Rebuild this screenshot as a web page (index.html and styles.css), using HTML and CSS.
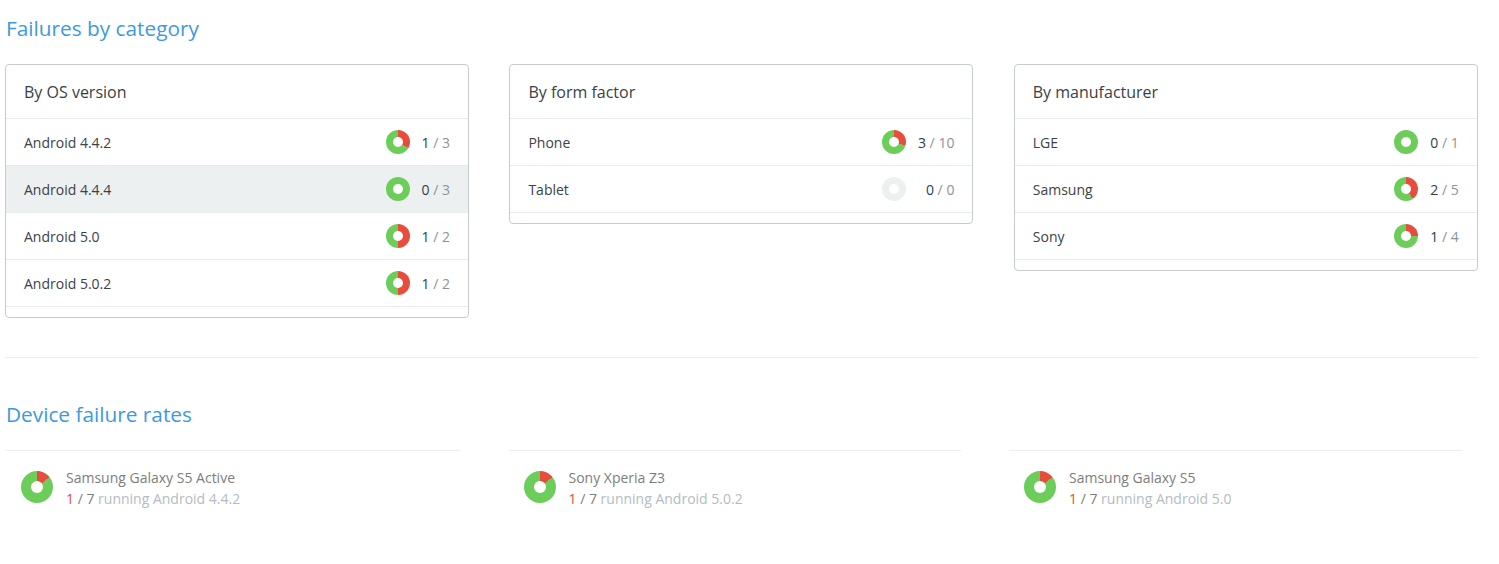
FILE: index.html
```html
<!DOCTYPE html>
<html lang="en">
<head>
<meta charset="utf-8">
<title>Failures</title>
<link rel="stylesheet" href="styles.css">
</head>
<body>
<div class="page">
  <h2 class="section-title">Failures by category</h2>
  <div class="cards">
    <div class="card">
      <div class="card-head">By OS version</div>
      <table class="card-table">
        <tr><td class="name">Android 4.4.2</td><td class="pie"><span class="donut" style="--p:33.33%"></span></td><td class="count"><b>1</b> / 3</td></tr>
        <tr class="active"><td class="name">Android 4.4.4</td><td class="pie"><span class="donut" style="--p:0%"></span></td><td class="count"><b>0</b> / 3</td></tr>
        <tr><td class="name">Android 5.0</td><td class="pie"><span class="donut" style="--p:50%"></span></td><td class="count"><b>1</b> / 2</td></tr>
        <tr><td class="name">Android 5.0.2</td><td class="pie"><span class="donut" style="--p:50%"></span></td><td class="count"><b>1</b> / 2</td></tr>
      </table>
    </div>
    <div class="card">
      <div class="card-head">By form factor</div>
      <table class="card-table">
        <tr><td class="name">Phone</td><td class="pie"><span class="donut" style="--p:30%"></span></td><td class="count"><b>3</b> / 10</td></tr>
        <tr><td class="name">Tablet</td><td class="pie"><span class="donut empty"></span></td><td class="count"><b>0</b> / 0</td></tr>
      </table>
    </div>
    <div class="card">
      <div class="card-head">By manufacturer</div>
      <table class="card-table">
        <tr><td class="name">LGE</td><td class="pie"><span class="donut" style="--p:0%"></span></td><td class="count"><b>0</b> / 1</td></tr>
        <tr><td class="name">Samsung</td><td class="pie"><span class="donut" style="--p:40%"></span></td><td class="count"><b>2</b> / 5</td></tr>
        <tr><td class="name">Sony</td><td class="pie"><span class="donut" style="--p:25%"></span></td><td class="count"><b>1</b> / 4</td></tr>
      </table>
    </div>
  </div>
  <hr class="divider">
  <h2 class="section-title">Device failure rates</h2>
  <div class="devices">
    <div class="device">
      <span class="donut big" style="--p:14.29%"></span>
      <div class="device-text">
        <div class="device-name">Samsung Galaxy S5 Active</div>
        <div class="device-rate"><span class="fail">1</span> <span class="total">/ 7</span> running Android 4.4.2</div>
      </div>
    </div>
    <div class="device">
      <span class="donut big" style="--p:14.29%"></span>
      <div class="device-text">
        <div class="device-name">Sony Xperia Z3</div>
        <div class="device-rate"><span class="fail">1</span> <span class="total">/ 7</span> running Android 5.0.2</div>
      </div>
    </div>
    <div class="device">
      <span class="donut big" style="--p:14.29%"></span>
      <div class="device-text">
        <div class="device-name">Samsung Galaxy S5</div>
        <div class="device-rate"><span class="fail">1</span> <span class="total">/ 7</span> running Android 5.0</div>
      </div>
    </div>
  </div>
</div>
</body>
</html>
```

FILE: styles.css
```css
* { box-sizing: border-box; }

body {
  margin: 0;
  background: #fff;
  font-family: "Open Sans", "Noto Sans", "Liberation Sans", sans-serif;
  color: #3b4248;
}

.page {
  width: 1483px;
  padding: 0 5px;
}

.section-title {
  margin: 17px 0 25px 0;
  font-size: 20.8px;
  line-height: 22px;
  font-weight: 400;
  color: #3d9ade;
  padding-left: 1px;
}

.cards {
  display: grid;
  grid-template-columns: 464px 464px 464px;
  column-gap: 40.4px;
  align-items: start;
}

.card {
  border: 1px solid #c6cbcf;
  border-radius: 4px;
  padding-bottom: 10px;
  background: #fff;
}

.card-head {
  height: 54px;
  display: flex;
  align-items: center;
  padding: 0 18px;
  font-size: 16px;
  color: #3a3f44;
  border-bottom: 1px solid #e9ecee;
}

.card-table {
  width: 100%;
  border-collapse: separate;
  border-spacing: 0;
}

.card-table td {
  height: 47px;
  border-bottom: 1px solid #e9ecee;
  font-size: 14px;
  vertical-align: middle;
  padding: 0;
}

.card-table tr.active td { background: #ecf0f1; }

.card-table .name {
  padding-left: 18px;
  color: #3b4248;
}

.card-table .pie {
  width: 36px;
  padding-right: 12px;
  line-height: 0;
}

.card-table .count {
  width: 1px;
  white-space: nowrap;
  text-align: right;
  padding-right: 18px;
  color: #8a9597;
}

.card-table .count b {
  font-weight: 400;
  color: #2c3e50;
}

.donut {
  display: inline-block;
  position: relative;
  width: 24px;
  height: 24px;
  border-radius: 50%;
  background: conic-gradient(#e74c3c 0 var(--p), #6ccd5a var(--p) 100%);
}

.donut::after {
  content: "";
  position: absolute;
  left: 50%;
  top: 50%;
  width: 10px;
  height: 10px;
  margin: -5px 0 0 -5px;
  border-radius: 50%;
  background: #fff;
}

.donut.empty { background: #ecf0f1; }

.donut.big {
  width: 32px;
  height: 32px;
  flex: none;
}

.donut.big::after {
  width: 12px;
  height: 12px;
  margin: -6px 0 0 -6px;
}

.divider {
  margin: 39px 0 0 0;
  border: 0;
  border-top: 1px solid #eeeeee;
  height: 0;
}

.divider + .section-title { margin-top: 45px; }

.devices {
  display: grid;
  grid-template-columns: 454px 452px 453px;
  column-gap: 48.5px;
  padding-left: 1px;
}

.device {
  border-top: 1px solid #eeeeee;
  display: flex;
  align-items: flex-start;
  gap: 13px;
  padding: 20px 0 0 15px;
}

.device-text {
  font-size: 14px;
  line-height: 21px;
  margin-top: -4px;
}

.device-name { color: #7d7d7d; }

.device-rate { color: #b4bcc2; }

.device-rate .fail { color: #e74c3c; }

.device-rate .total { color: #7d7d7d; }
```
